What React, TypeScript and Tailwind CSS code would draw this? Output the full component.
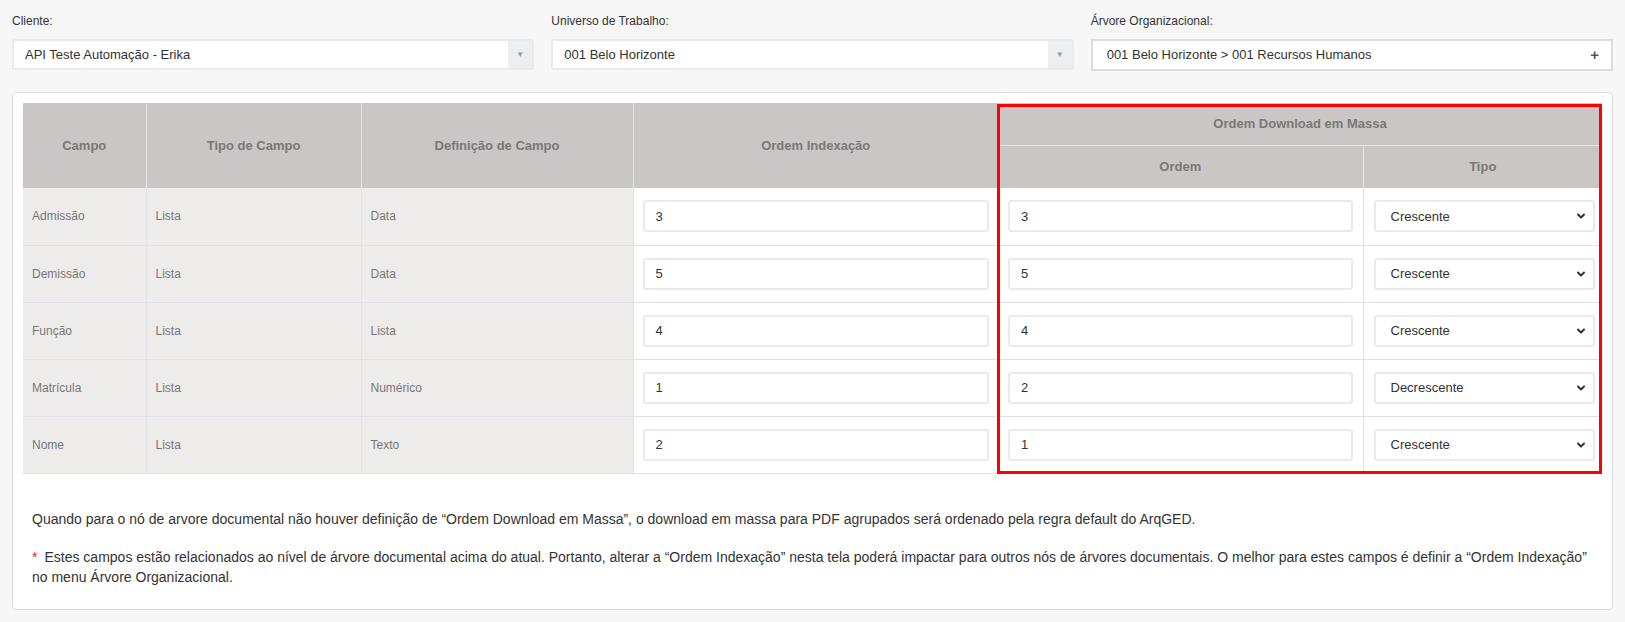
import { ChevronDown } from 'lucide-react';

const rows = [
  { campo: 'Admissão', tipo: 'Lista', def: 'Data', idx: '3', ordem: '3', sort: 'Crescente' },
  { campo: 'Demissão', tipo: 'Lista', def: 'Data', idx: '5', ordem: '5', sort: 'Crescente' },
  { campo: 'Função', tipo: 'Lista', def: 'Lista', idx: '4', ordem: '4', sort: 'Crescente' },
  { campo: 'Matrícula', tipo: 'Lista', def: 'Numérico', idx: '1', ordem: '2', sort: 'Decrescente' },
  { campo: 'Nome', tipo: 'Lista', def: 'Texto', idx: '2', ordem: '1', sort: 'Crescente' },
];

const SelectField = ({ label, value }: { label: string; value: string }) => (
  <div>
    <label className="block text-[12px] leading-[17px] text-[#333] mb-[9px]">{label}</label>
    <div className="flex h-[31px] border-2 border-[#e8ebee] rounded-[3px] bg-white">
      <div className="flex-1 flex items-center pl-[11px] text-[13px] text-[#333]">{value}</div>
      <div className="w-[24px] bg-[#eceeef] flex items-center justify-center">
        <span className="text-[8px] text-[#999]">▼</span>
      </div>
    </div>
  </div>
);

const TextInput = ({ value }: { value: string }) => (
  <div className="h-[32px] border-2 border-[#e8ebee] rounded-[3px] bg-white flex items-center pl-[11px] text-[13px] text-[#333]">
    {value}
  </div>
);

const SortSelect = ({ value }: { value: string }) => (
  <div className="h-[32px] border-2 border-[#e8ebee] rounded-[3px] bg-white flex items-center justify-between pl-[15px] pr-[6px] text-[13px] text-[#333]">
    <span>{value}</span>
    <ChevronDown size={12} strokeWidth={4} className="text-[#333]" />
  </div>
);

const App = () => {
  return (
    <div className="min-h-[622px] bg-[#f7f7f7] px-3 pt-[13px] pb-3 font-['Liberation_Sans',Arial,sans-serif]">
      <div className="grid grid-cols-3 gap-[17px]">
        <SelectField label="Cliente:" value="API Teste Automação - Erika" />
        <SelectField label="Universo de Trabalho:" value="001 Belo Horizonte" />
        <div>
          <label className="block text-[12px] leading-[17px] text-[#333] mb-[9px]">Árvore Organizacional:</label>
          <div className="flex h-[32px] border-2 border-[#dddddd] bg-white items-center justify-between pl-[14px] pr-[12px] text-[13px] text-[#333]">
            <span>001 Belo Horizonte &gt; 001 Recursos Humanos</span>
            <span className="font-bold text-[15px] text-[#555]">+</span>
          </div>
        </div>
      </div>

      <div className="mt-[21px] bg-white border border-[#dddddd] rounded-[4px] px-[10px] pt-[10px] pb-[22px]">
        <div className="relative">
          <table className="w-full table-fixed border-collapse">
            <colgroup>
              <col className="w-[123px]" />
              <col className="w-[215px]" />
              <col className="w-[272px]" />
              <col className="w-[365px]" />
              <col className="w-[365px]" />
              <col />
            </colgroup>
            <thead>
              <tr className="bg-[#cac6c5] text-[13px] font-bold text-[#7a7877]">
                <th rowSpan={2} className="border-r border-[#e4e4e4] align-middle">Campo</th>
                <th rowSpan={2} className="border-r border-[#e4e4e4] align-middle">Tipo de Campo</th>
                <th rowSpan={2} className="border-r border-[#e4e4e4] align-middle">Definição de Campo</th>
                <th rowSpan={2} className="align-middle">Ordem Indexação</th>
                <th colSpan={2} className="h-[42px] border-b border-[#e4e4e4]">Ordem Download em Massa</th>
              </tr>
              <tr className="bg-[#cac6c5] text-[13px] font-bold text-[#7a7877]">
                <th className="h-[43px] border-r border-[#e4e4e4]">Ordem</th>
                <th className="h-[43px]">Tipo</th>
              </tr>
            </thead>
            <tbody>
              {rows.map((r) => (
                <tr key={r.campo} className="border-b border-[#dfe3e8] text-[12px] text-[#777]">
                  <td className="h-[57px] bg-[#eeeceb] pl-[9px] border-r border-[#dfe3e8]">{r.campo}</td>
                  <td className="bg-[#eeeceb] pl-[9px] border-r border-[#dfe3e8]">{r.tipo}</td>
                  <td className="bg-[#eeeceb] pl-[9px] border-r border-[#dfe3e8]">{r.def}</td>
                  <td className="px-[9px]"><TextInput value={r.idx} /></td>
                  <td className="px-[10px] border-r border-[#dfe3e8]"><TextInput value={r.ordem} /></td>
                  <td className="pl-[10px] pr-[7px]"><SortSelect value={r.sort} /></td>
                </tr>
              ))}
            </tbody>
          </table>
          <div className="absolute left-[974px] top-[1px] right-0 bottom-0 border-[3px] border-[#ff0000] pointer-events-none" />
        </div>

        <div className="px-[9px] text-[14px] leading-[20px] text-[#333]">
          <p className="mt-[35px] mb-[18px]">
            Quando para o nó de arvore documental não houver definição de “Ordem Download em Massa”, o download em massa para PDF agrupados será ordenado pela regra default do ArqGED.
          </p>
          <p>
            <span className="text-[#e8173c] mr-[7px]">*</span>Estes campos estão relacionados ao nível de árvore documental acima do atual. Portanto, alterar a “Ordem Indexação” nesta tela poderá impactar para outros nós de árvores documentais. O melhor para estes campos é definir a “Ordem Indexação” no menu Árvore Organizacional.
          </p>
        </div>
      </div>
    </div>
  );
};

export default App;
